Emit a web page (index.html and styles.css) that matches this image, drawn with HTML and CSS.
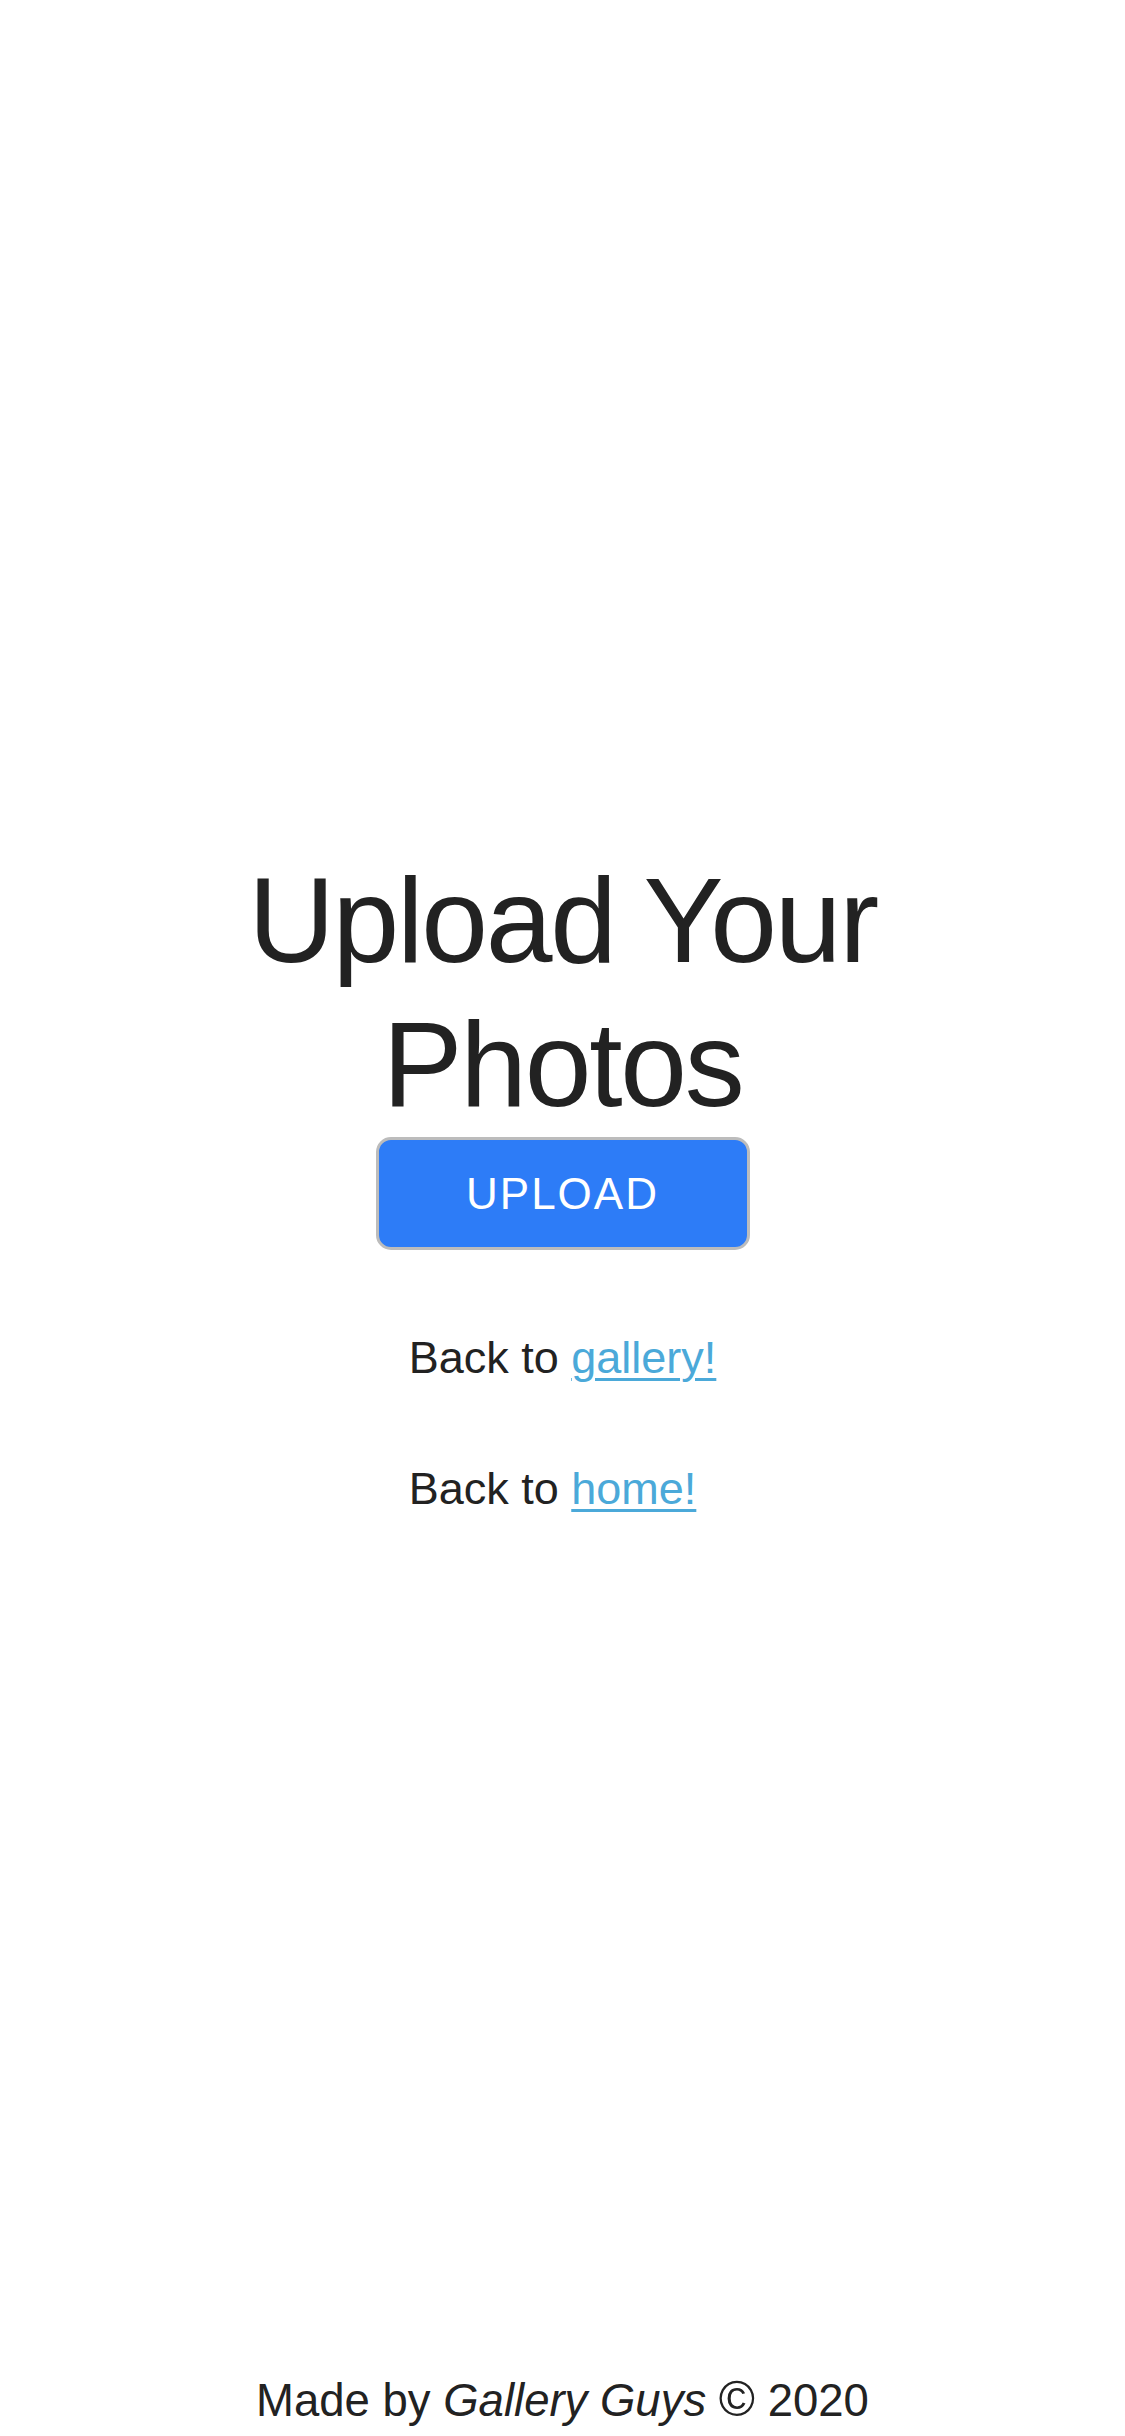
FILE: index.html
```html
<!DOCTYPE html>
<html lang="en">
<head>
<meta charset="utf-8">
<title>Upload Your Photos</title>
<link rel="stylesheet" href="styles.css">
</head>
<body>
<div class="page">
  <main class="content">
    <h1 class="title">Upload Your Photos</h1>
    <button class="upload-btn" type="button">Upload</button>
    <div class="links">
      <p class="back back-gallery">Back to <a href="#">gallery!</a></p>
      <p class="back back-home">Back to <a href="#">home!</a></p>
    </div>
  </main>
  <footer class="footer">Made by <em>Gallery Guys</em> <span class="copy">&copy;</span> 2020</footer>
</div>
</body>
</html>
```

FILE: styles.css
```css
html, body {
  margin: 0;
  padding: 0;
  background: #ffffff;
}

body {
  font-family: "Liberation Sans", Arial, Helvetica, sans-serif;
  color: #222222;
}

.page {
  min-height: 2436px;
  display: flex;
  flex-direction: column;
  align-items: center;
  box-sizing: border-box;
}

.content {
  display: flex;
  flex-direction: column;
  align-items: center;
  padding-top: 848px;
}

.title {
  margin: 0;
  width: 700px;
  text-align: center;
  font-weight: 400;
  font-size: 120px;
  line-height: 144px;
  letter-spacing: -2.3px;
  color: #222222;
}

.upload-btn {
  box-sizing: border-box;
  width: 374px;
  height: 113px;
  margin-top: 1px;
  border: 3px solid #bcbcbc;
  border-radius: 15px;
  background: #2d7cf7;
  color: #ffffff;
  font-family: "Liberation Sans", Arial, Helvetica, sans-serif;
  font-size: 44px;
  line-height: 107px;
  letter-spacing: 2px;
  text-transform: uppercase;
  padding: 0;
  cursor: pointer;
}

.links {
  display: flex;
  flex-direction: column;
  align-items: flex-start;
}

.back {
  margin: 0;
  font-size: 45px;
  line-height: 54px;
  text-align: left;
}

.back-gallery {
  margin-top: 81px;
}

.back-home {
  margin-top: 77px;
}

.back a {
  color: #4ba9d9;
  text-decoration: underline;
  text-decoration-thickness: 3px;
  text-underline-offset: 5px;
}

.footer {
  margin-top: auto;
  padding-bottom: 7px;
  font-size: 45.5px;
  line-height: 56px;
  text-align: center;
  color: #222222;
}

.footer em {
  font-style: italic;
}

.copy {
  font-size: 1.08em;
}
```
